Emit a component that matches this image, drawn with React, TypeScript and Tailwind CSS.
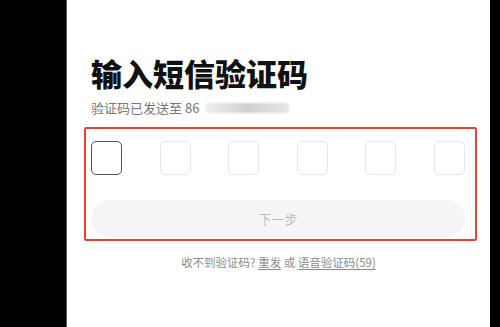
export default function App() {
  const cells = [0, 1, 2, 3, 4, 5];
  return (
    <div
      className="flex h-[327px] w-[500px] overflow-hidden bg-black"
      style={{ fontFamily: '"Noto Sans CJK SC", "Noto Sans", sans-serif' }}
    >
      <div className="w-[66px] shrink-0 bg-black" />
      <div className="flex w-[424px] shrink-0 flex-col bg-white border-l border-[#555]">
        {/* header */}
        <div className="pl-[24px] pt-[53px]">
          <h1 className="text-[31px] font-black leading-[40px] text-[#111]">输入短信验证码</h1>
          <p className="mt-[6px] flex items-center text-[13px] leading-[18px] text-[#777]">
            <span>验证码已发送至 86</span>
            <span className="ml-[6px] inline-block h-[10px] w-[84px] rounded-sm bg-gradient-to-r from-[#f0f0f0] via-[#cfcfcf] to-[#e6e6e6] blur-[1px]" />
          </p>
        </div>

        {/* code inputs + next button */}
        <div className="ml-[17px] mt-[10px] w-[393px] rounded-[2px] border-2 border-[#e8403a] pb-[2px] pl-[5px] pr-[10px] pt-[12px]">
          <div className="flex justify-between">
            {cells.map((i) => (
              <div
                key={i}
                className={
                  i === 0
                    ? 'h-[34px] w-[31px] rounded-[5px] border-[1.5px] border-[#555]'
                    : 'h-[34px] w-[31px] rounded-[5px] border border-[#e6e6e6]'
                }
              />
            ))}
          </div>
          <button className="mt-[25px] flex h-[37px] w-full items-center justify-center rounded-full bg-[#f5f5f5] text-[13px] text-[#bdbdbd]">
            下一步
          </button>
        </div>

        {/* resend */}
        <p className="mt-[12px] text-center text-[11.5px] leading-[18px] text-[#8a8a8a]">
          收不到验证码?{' '}
          <span className="underline underline-offset-2">重发</span> 或{' '}
          <span className="underline underline-offset-2">语音验证码(59)</span>
        </p>
      </div>
      <div className="flex-1 bg-black" />
    </div>
  );
}
